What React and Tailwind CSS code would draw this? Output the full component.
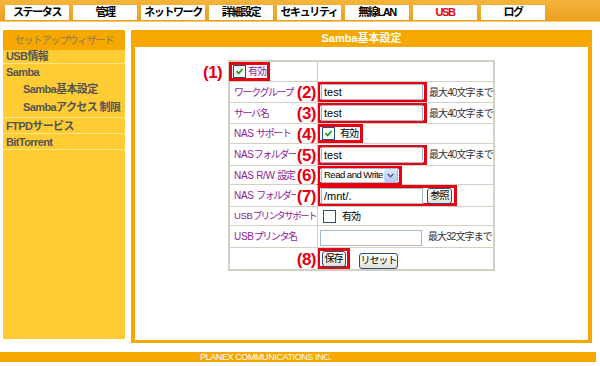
import React from "react";

const tabs = ["ステータス", "管理", "ネットワーク", "詳細設定", "セキュリティ", "無線LAN", "USB", "ログ"];

const J = ({ children }) => <span className="tracking-[-1.4px]">{children}</span>;

const CheckBox = ({ checked }) => (
  <span className="inline-flex w-[13px] h-[13px] shrink-0 items-center justify-center border border-[#1c5180] bg-white">
    {checked && (
      <svg width="9" height="9" viewBox="0 0 9 9">
        <path d="M1.5 4.2 L3.6 6.4 L7.6 2" stroke="#21a121" strokeWidth="1.8" fill="none" />
      </svg>
    )}
  </span>
);

const TextBox = ({ value }) => (
  <input
    readOnly
    value={value}
    className="h-[16px] w-[102px] border border-[#a5b9cf] bg-white px-[2px] text-[11px] leading-[14px] text-black outline-none"
  />
);

const XpButton = ({ children, w }) => (
  <button
    type="button"
    className={`${w} h-[16px] whitespace-nowrap rounded-[3px] border border-[#2a4f7e] bg-gradient-to-b from-white to-[#e4e2d6] text-[10px] leading-[14px] tracking-[-1px] text-black`}
  >
    {children}
  </button>
);

const Note = ({ children, className = "" }) => (
  <span
    className={`absolute top-1/2 -translate-y-1/2 whitespace-nowrap text-[17px] font-bold leading-none tracking-[-0.5px] text-[#e60012] ${className}`}
  >
    {children}
  </span>
);

const Row = ({ h, label, children, note, last }) => (
  <div className={`flex ${h} ${last ? "" : "border-b border-[#d3cfc2]"}`}>
    <div className="relative flex w-[88px] shrink-0 items-center border-r border-[#d3cfc2] pl-[4px] text-[10px] tracking-[-0.3px] text-[#8b1e9c]">
      <span className="whitespace-nowrap">{label}</span>
      {note && <Note className="right-[1px] bg-white pl-[1px]">{note}</Note>}
    </div>
    <div className="flex flex-1 items-center whitespace-nowrap">{children}</div>
  </div>
);

const Limit = ({ children }) => (
  <span className="ml-[2px] whitespace-nowrap text-[10px] tracking-[-0.9px] text-[#333]">{children}</span>
);

const RedField = ({ value }) => (
  <div className="-ml-[1px] flex h-[20px] items-center border-[3px] border-[#e60012] px-[1px]">
    <TextBox value={value} />
  </div>
);

export default function App() {
  return (
    <div className="relative h-[366px] w-[600px] overflow-hidden bg-white font-['Liberation_Sans','Noto_Sans_CJK_JP',sans-serif]">
      {/* top menu */}
      <div className="flex h-[22px] gap-[4px] border-b border-[#f7c866] bg-gradient-to-b from-[#f4b43c] to-[#e99f1a] pl-[5px] pt-[5px]">
        {tabs.map((t) => (
          <div
            key={t}
            className={`flex h-[15px] w-[64px] items-center justify-center whitespace-nowrap bg-white text-[11px] font-bold tracking-[-1.4px] ${
              t === "USB" ? "text-[#e60012]" : "text-black"
            }`}
          >
            {t}
          </div>
        ))}
      </div>

      <div className="mt-[8px] flex pl-[3px]">
        {/* sidebar */}
        <div className="flex h-[309px] w-[122px] flex-col whitespace-nowrap bg-[#ffcc33] text-[11px] font-bold tracking-[-0.6px] text-[#555]">
          <div className="flex h-[20px] items-center justify-center bg-[#f6a800] text-[10px] font-normal tracking-[-1px] text-[#8a7a5a]">
            セットアップウィザード
          </div>
          <div className="flex h-[14px] items-center border-b border-[#ffe38c] pl-[3px]">USB情報</div>
          <div className="flex h-[54px] flex-col border-b border-[#ffe38c] pl-[3px]">
            <div className="flex h-[16px] items-center">Samba</div>
            <div className="flex h-[18px] items-center pl-[17px]">Samba基本設定</div>
            <div className="flex h-[19px] items-center pl-[17px]">Sambaアクセス 制限</div>
          </div>
          <div className="flex h-[16px] items-center border-b border-[#ffe38c] pl-[3px] pt-[2px]">FTPDサービス</div>
          <div className="flex h-[16px] items-center border-b border-[#ffe38c] pl-[3px] pt-[1px]">BitTorrent</div>
        </div>

        {/* main panel */}
        <div className="ml-[6px] flex h-[313px] w-[461px] flex-col bg-[#f6a800] px-[4px] pb-[3px]">
          <div className="flex h-[17px] items-center justify-center text-[11px] font-bold text-white">
            Samba基本設定
          </div>
          <div className="flex-1 bg-white pt-[13px]">
            <div className="relative mx-auto w-[267px] border-2 border-[#d3cfc2]">
              <div className="flex h-[20px] border-b border-[#d3cfc2]">
                <div className="relative flex w-[88px] shrink-0 items-stretch border-r border-[#d3cfc2]">
                  <Note className="left-[-27px]">(1)</Note>
                  <div className="-ml-[1px] flex items-center gap-[2px] whitespace-nowrap border-[3px] border-[#e60012] pl-[1px] pr-[1px] text-[10px] tracking-[-1px] text-[#8b1e9c]">
                    <CheckBox checked />
                    <span>有効</span>
                  </div>
                </div>
                <div className="flex-1" />
              </div>

              <Row h="h-[21px]" label={<J>ワークグループ</J>} note="(2)">
                <RedField value="test" />
                <Limit>最大40文字まで</Limit>
              </Row>
              <Row h="h-[21px]" label={<J>サーバ名</J>} note="(3)">
                <RedField value="test" />
                <Limit>最大40文字まで</Limit>
              </Row>
              <Row h="h-[20px]" label={<>NAS <J>サポート</J></>} note="(4)">
                <div className="-ml-[1px] flex h-[19px] items-center whitespace-nowrap border-[3px] border-[#e60012] pl-[2px] pr-[2px] text-[10px] tracking-[-1px]">
                  <CheckBox checked />
                  <span className="ml-[5px]">有効</span>
                </div>
              </Row>
              <Row h="h-[22px]" label={<>NAS<J>フォルダー名</J></>} note="(5)">
                <RedField value="test" />
                <Limit>最大40文字まで</Limit>
              </Row>
              <Row h="h-[19px]" label={<>NAS R/W <J>設定</J></>} note="(6)">
                <div className="-ml-[1px] flex h-[19px] items-center border-[3px] border-[#e60012] px-[1px]">
                  <div className="flex h-[15px] w-[77px] items-center border border-[#a5b9cf] bg-white">
                    <span className="flex-1 whitespace-nowrap pl-[2px] text-[9.5px] leading-none tracking-[-0.5px]">
                      Read and Write
                    </span>
                    <span className="flex h-[13px] w-[13px] shrink-0 items-center justify-center rounded-[2px] bg-gradient-to-b from-[#dce6fd] to-[#b4c8f6]">
                      <svg width="7" height="5" viewBox="0 0 7 5">
                        <path d="M0.5 0.8 L3.5 3.8 L6.5 0.8" stroke="#4d6185" strokeWidth="1.4" fill="none" />
                      </svg>
                    </span>
                  </div>
                </div>
              </Row>
              <Row h="h-[22px]" label={<>NAS <J>フォルダー</J></>} note="(7)">
                <div className="-ml-[1px] flex h-[21px] items-center gap-[4px] border-[3px] border-[#e60012] px-[1px] pr-[2px]">
                  <TextBox value="/mnt/." />
                  <XpButton w="w-[25px]">参照</XpButton>
                </div>
              </Row>
              <Row
                h="h-[19px]"
                label={
                  <span className="text-[9.5px]">
                    USB<span className="tracking-[-1.6px]">プリンタサポート</span>
                  </span>
                }
              >
                <div className="flex items-center pl-[5px] text-[10px] tracking-[-1px]">
                  <CheckBox />
                  <span className="ml-[6px]">有効</span>
                </div>
              </Row>
              <Row h="h-[22px]" label={<>USB<J>プリンタ名</J></>}>
                <div className="ml-[2px]">
                  <TextBox value="" />
                </div>
                <Limit>
                  <span className="ml-[4px]">最大32文字まで</span>
                </Limit>
              </Row>
              <Row h="h-[21px]" label="" note="(8)" last>
                <div className="-ml-[1px] flex h-[21px] w-[33px] items-center justify-center border-[3px] border-[#e60012]">
                  <XpButton w="w-[24px]">保存</XpButton>
                </div>
                <div className="ml-[9px]">
                  <XpButton w="w-[39px]">リセット</XpButton>
                </div>
              </Row>
            </div>
          </div>
        </div>
      </div>

      {/* footer */}
      <div className="absolute left-0 top-[352px] flex h-[10px] w-[596px] items-center bg-[#f6a800] pl-[200px] text-[9px] leading-none tracking-[-0.4px] text-white">
        PLANEX COMMUNICATIONS INC.
      </div>
    </div>
  );
}
